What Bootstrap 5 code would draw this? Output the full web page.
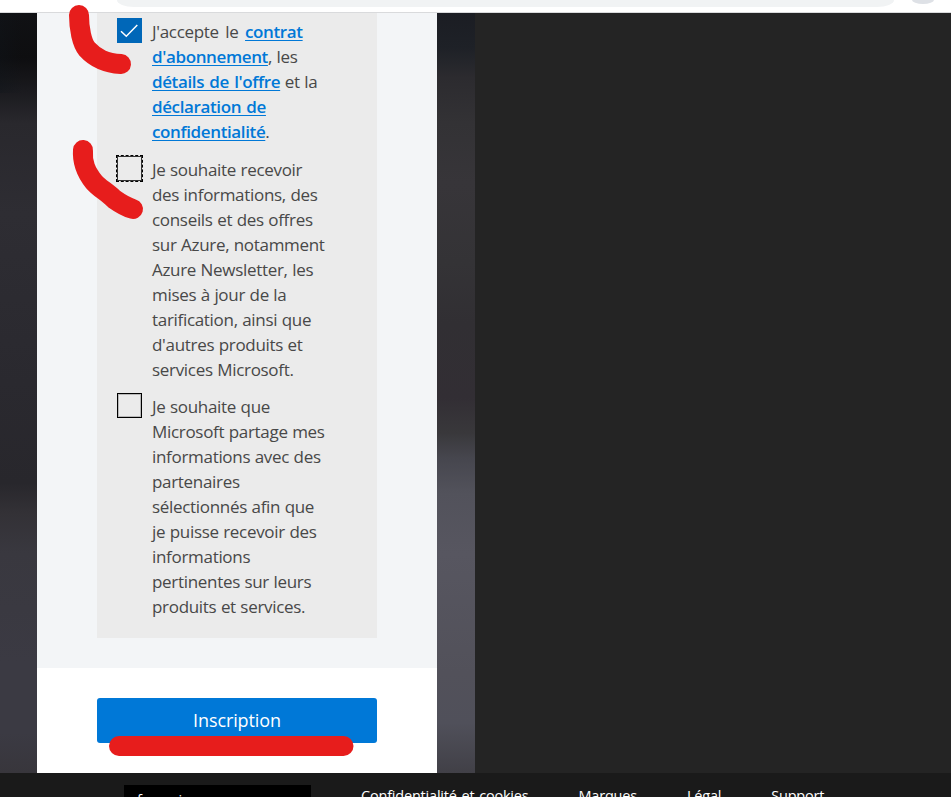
<!DOCTYPE html>
<html lang="fr">
<head>
<meta charset="utf-8">
<meta name="viewport" content="width=device-width, initial-scale=1">
<title>Inscription Azure</title>
<link href="https://cdn.jsdelivr.net/npm/bootstrap@5.3.0/dist/css/bootstrap.min.css" rel="stylesheet">
<style>
html, body { height: 797px; overflow: hidden; }
body { font-family: "Open Sans", "Noto Sans", sans-serif; background: #242424; }
.chrome-bar { height: 13px; background: #fff; border-bottom: 1px solid #d9dadc; }
.address { margin-left: 117px; width: 777px; height: 7px; background: #f1f3f4; border-radius: 0 0 17px 17px / 0 0 7px 7px; }
.avatar { margin-left: 18px; width: 22px; height: 4px; background: #dee1e6; border-radius: 0 0 11px 11px / 0 0 4px 4px; }
.stage { height: 760px; }
.photo-left { width: 37px; background: linear-gradient(90deg, rgba(15,21,27,.35), transparent 60%) 0 0 / 100% 80px no-repeat, linear-gradient(#101114 0, #0e0e10 45px, #19191d 75px, #29282d 110px, #2e2d33 200px, #2a292f 370px, #28272c 470px, #333136 500px, #39383f 540px, #3b3a43 650px, #3b3a43 720px, #38363c 760px); }
.photo-right { width: 38px; background: linear-gradient(#1b1d23 0, #1e2127 35px, #2c2b2f 65px, #333235 110px, #373539 170px, #343336 250px, #312f33 310px, #322e34 385px, #39383b 420px, #46464e 445px, #52525b 480px, #575660 540px, #52515a 660px, #50505a 710px, #414047 760px); }
.sheet { width: 400px; background: #fff; }
.sheet-top { height: 655px; background: #f3f5f7; padding: 0 60px; }
.consents { height: 625px; background: #ebebeb; padding: 6px 20px 0; color: #484848; font-size: 17px; line-height: 25px; gap: 12.5px; }
.consents p { letter-spacing: -.31px; word-spacing: .4px; white-space: nowrap; }
.consents .terms-lead { word-spacing: 2.4px; }
.consents .terms { word-spacing: .5px; }
.consents a { color: #0078d7; font-weight: 600; letter-spacing: -.38px; word-spacing: 1.2px; text-decoration-thickness: 1px; text-underline-offset: 2px; }
.tick { width: 25px; height: 25px; margin-right: 10px; margin-top: -1px; flex: none; border: 1px solid #000; box-shadow: inset 0 0 0 1px #b9b9b9; }
.tick.on { background: #0067b8; border: 0; box-shadow: none; display: block; }
.tick.focused { width: 27px; height: 27px; margin: -2px 9px 0 -1px; border: 1px dashed #000; box-shadow: inset 0 0 0 1px #333; }
.btn-send { height: 45px; margin: 30px 60px 0; background: #0078d7; color: #fff; border: 0; border-radius: 3px; font-size: 18px; letter-spacing: -.1px; padding: 0; width: 280px; }
.foot { height: 24px; background: #1a1a1a; color: #fff; font-size: 14.5px; line-height: 20px; letter-spacing: -.2px; word-spacing: 1.2px; overflow: hidden; }
.language { margin: 12px 0 0 124px; width: 187px; height: 40px; background: #000; padding: 5px 13px; }
.foot-links { margin: 13px 0 0 50px; gap: 50px; white-space: nowrap; }
.marks { position: absolute; left: 0; top: 0; pointer-events: none; }
</style>
<script src="https://cdn.jsdelivr.net/npm/bootstrap@5.3.0/dist/js/bootstrap.bundle.min.js"></script>
</head>
<body>
<div class="chrome-bar d-flex"><div class="address"></div><div class="avatar"></div></div>
<main class="stage d-flex">
  <div class="photo-left"></div>
  <section class="sheet">
    <div class="sheet-top">
      <div class="consents d-flex flex-column">
        <div class="d-flex">
          <svg class="tick on" viewBox="0 0 25 25" fill="none" stroke="#fff" stroke-width="1.5"><path d="M4 13.2 9.3 18.3 20.3 7"/></svg>
          <p class="terms mb-0"><span class="terms-lead">J'accepte le </span><a href="#">contrat<br>d'abonnement</a>, les<br><a href="#">détails de l'offre</a> et la<br><a href="#">déclaration de<br>confidentialité</a>.</p>
        </div>
        <div class="d-flex">
          <span class="tick focused"></span>
          <p class="mb-0">Je souhaite recevoir<br>des informations, des<br>conseils et des offres<br>sur Azure, notamment<br>Azure Newsletter, les<br>mises à jour de la<br>tarification, ainsi que<br>d'autres produits et<br>services Microsoft.</p>
        </div>
        <div class="d-flex">
          <span class="tick"></span>
          <p class="mb-0">Je souhaite que<br>Microsoft partage mes<br>informations avec des<br>partenaires<br>sélectionnés afin que<br>je puisse recevoir des<br>informations<br>pertinentes sur leurs<br>produits et services.</p>
        </div>
      </div>
    </div>
    <button class="btn btn-send" type="button">Inscription</button>
  </section>
  <div class="photo-right"></div>
</main>
<footer class="foot d-flex">
  <div class="language">français</div>
  <nav class="foot-links d-flex"><span>Confidentialité et cookies</span><span>Marques</span><span>Légal</span><span>Support</span></nav>
</footer>
<svg class="marks" width="475" height="797" fill="none" stroke="#e71d1c" stroke-width="20" stroke-linecap="round" stroke-linejoin="round">
  <path d="M79 15C79 29 82 43 87 49C96 59 106 63 121 64"/>
  <path d="M83 150C82 163 86 172 94 182C99 188 107 192 114 199C121 204 126 207 133 209"/>
  <path d="M119 746H343.5"/>
</svg>
</body>
</html>
